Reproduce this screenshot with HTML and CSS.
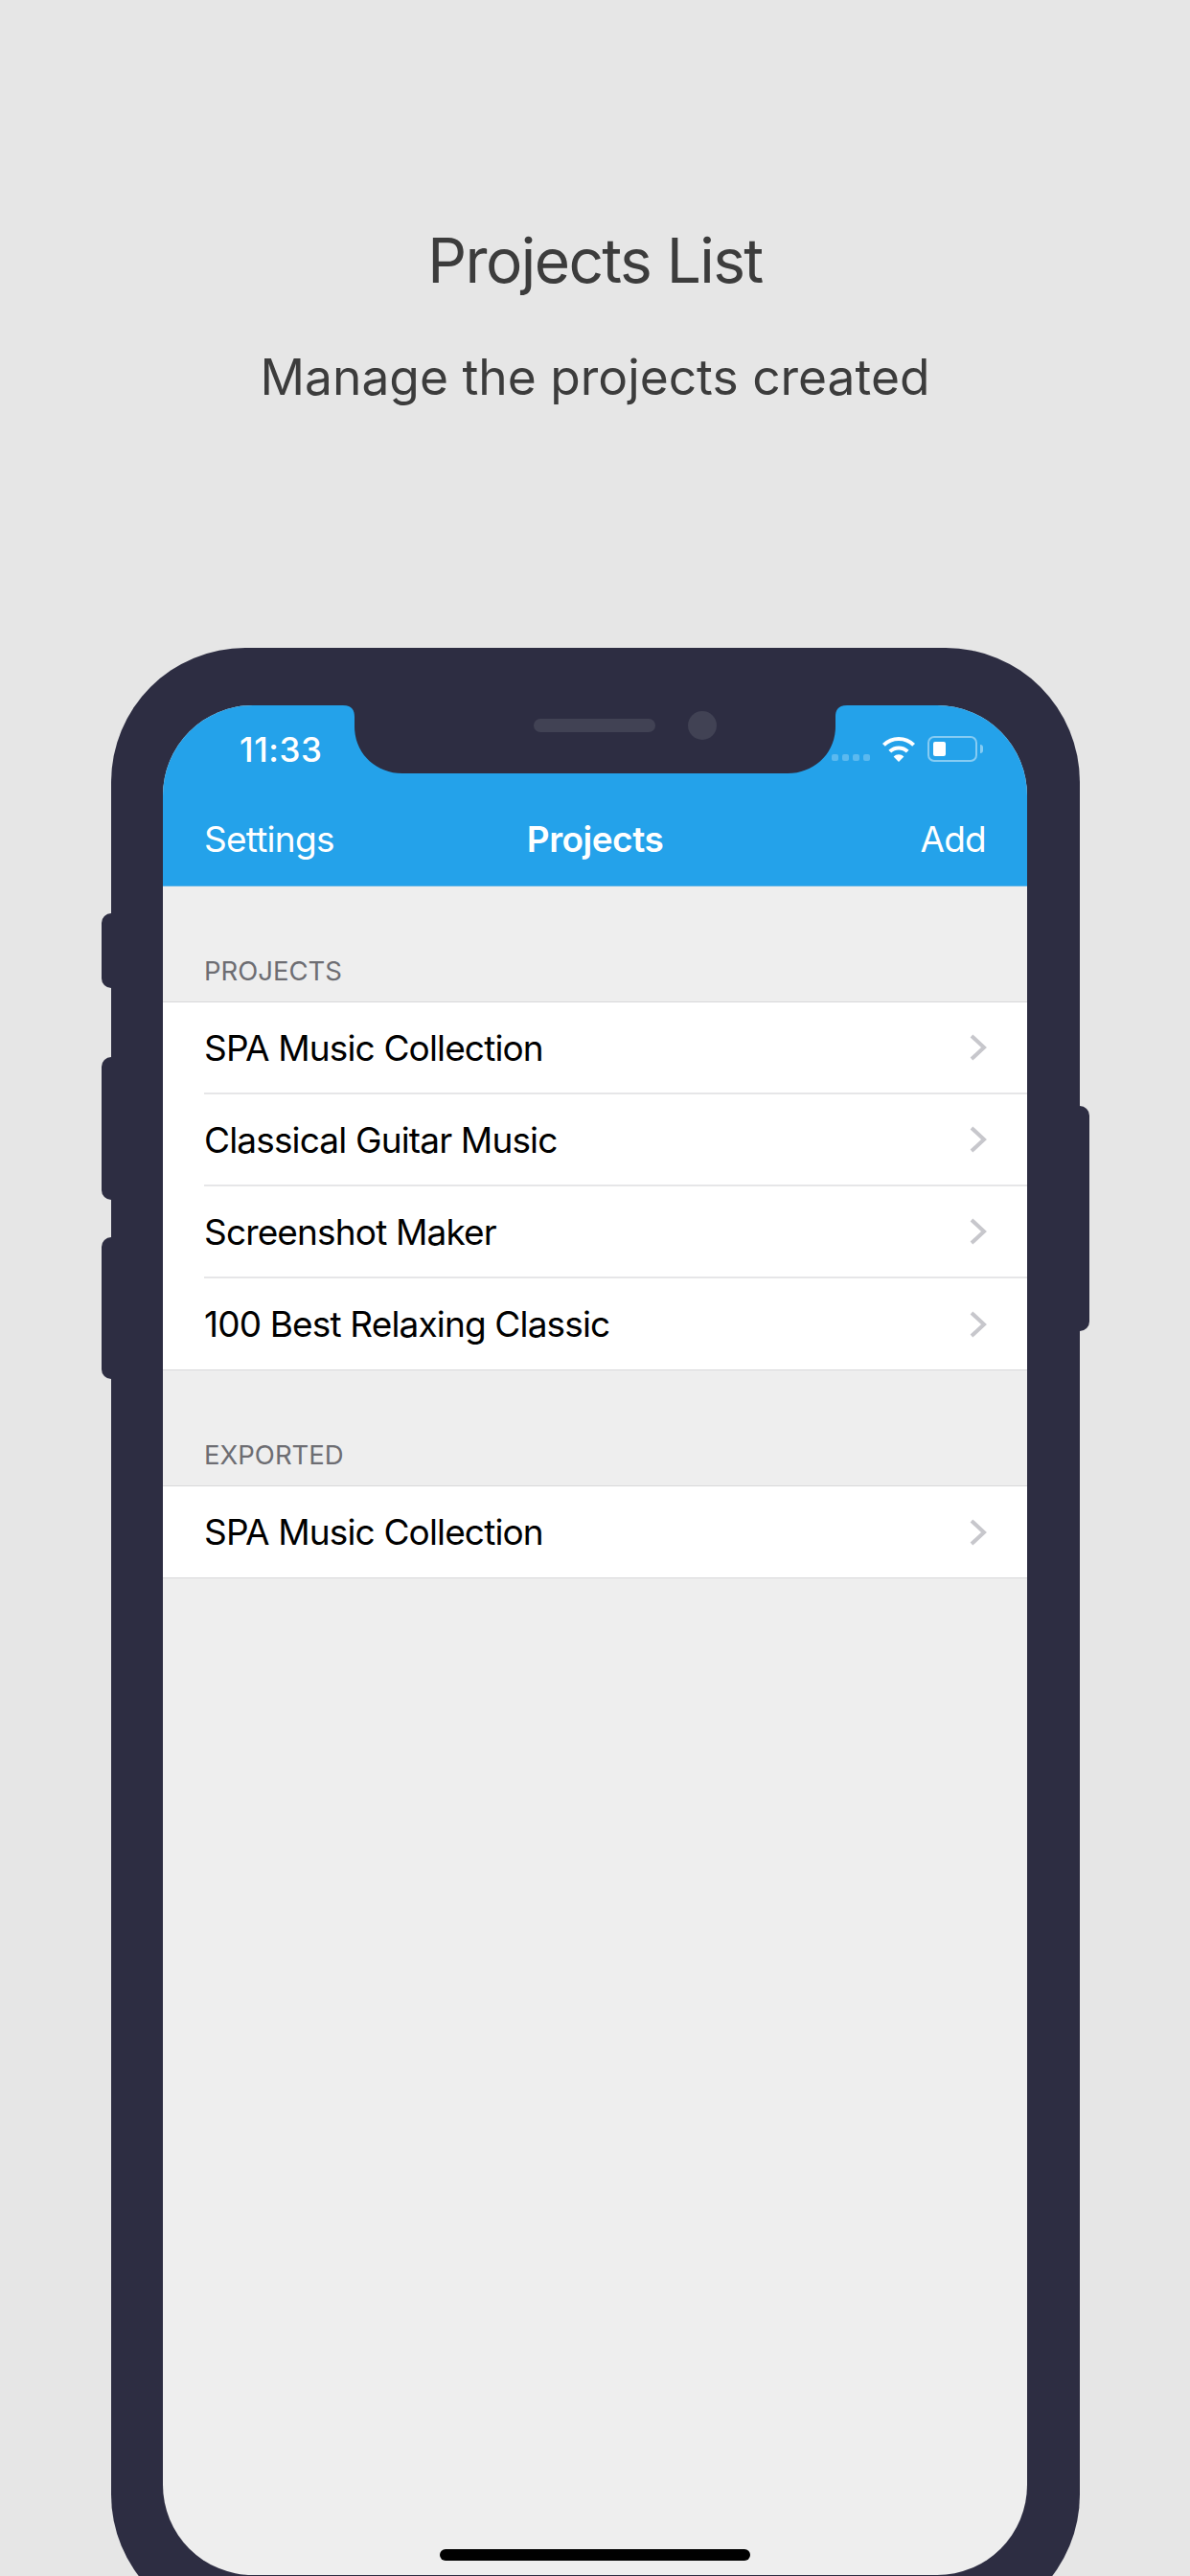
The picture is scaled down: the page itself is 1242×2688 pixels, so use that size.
FILE: index.html
```html
<!DOCTYPE html>
<html lang="en">
<head>
    <meta charset="UTF-8">
    <meta name="viewport" content="width=device-width, initial-scale=1.0">
    <title>Projects List</title>
    <link rel="stylesheet" href="styles.css">
</head>
<body>
    <div class="caption">
        <h1>Projects List</h1>
        <p>Manage the projects created</p>
    </div>

    <div class="phone">
        <span class="btn btn-mute"></span>
        <span class="btn btn-volup"></span>
        <span class="btn btn-voldown"></span>
        <span class="btn btn-power"></span>

        <svg class="notch" width="526" height="72" viewBox="0 0 526 72">
            <path fill="#2d2d42" d="M0 0H526C516 0 514 6 514 12V22C514 50 492 71 464 71H62C34 71 12 50 12 22V12C12 6 10 0 0 0Z"/>
        </svg>
        <span class="speaker"></span>
        <span class="camera"></span>

        <div class="screen">
            <div class="topbar">
                <div class="status">
                    <span class="time">11:33</span>
                    <div class="status-right">
                        <div class="signal"><i></i><i></i><i></i><i></i></div>
                        <svg class="wifi" width="36" height="27" viewBox="0 0 36 27">
                            <g fill="none" stroke="#fff" stroke-width="4">
                                <path d="M2.4 9.4A22 22 0 0 1 33.6 9.4"/>
                                <path d="M8.8 16.2A13 13 0 0 1 27.2 16.2"/>
                            </g>
                            <path fill="#fff" d="M18 27L12.6 21.6A7.6 7.6 0 0 1 23.4 21.6Z"/>
                        </svg>
                        <div class="battery"><span class="level"></span></div>
                        <span class="nub"></span>
                    </div>
                </div>
                <div class="nav">
                    <span>Settings</span>
                    <b>Projects</b>
                    <span class="nav-right">Add</span>
                </div>
            </div>

            <div class="content">
                <div class="section-title">PROJECTS</div>
                <ul class="list">
                    <li>SPA Music Collection<svg class="chev" width="18" height="28" viewBox="0 0 18 28"><path d="M2 2L15 14L2 26"/></svg></li>
                    <li>Classical Guitar Music<svg class="chev" width="18" height="28" viewBox="0 0 18 28"><path d="M2 2L15 14L2 26"/></svg></li>
                    <li>Screenshot Maker<svg class="chev" width="18" height="28" viewBox="0 0 18 28"><path d="M2 2L15 14L2 26"/></svg></li>
                    <li>100 Best Relaxing Classic<svg class="chev" width="18" height="28" viewBox="0 0 18 28"><path d="M2 2L15 14L2 26"/></svg></li>
                </ul>
                <div class="section-title">EXPORTED</div>
                <ul class="list">
                    <li>SPA Music Collection<svg class="chev" width="18" height="28" viewBox="0 0 18 28"><path d="M2 2L15 14L2 26"/></svg></li>
                </ul>
            </div>

            <div class="home-bar"></div>
        </div>
    </div>
</body>
</html>
```

FILE: styles.css
```css
*{margin: 0;padding: 0;box-sizing: border-box;}
html,body{width: 1242px;height: 2688px;overflow: hidden;}
body{background: #e6e6e6;font-family: Inter, "Noto Sans", sans-serif;}

.caption{height: 676px;padding-top: 232px;text-align: center;color: #3c3c3c;}
.caption h1{font-size: 64px;font-weight: 400;letter-spacing: -1.6px;line-height: 80px;}
.caption p{font-size: 51.5px;font-weight: 400;line-height: 66px;margin-top: 48px;}

.phone{position: relative;width: 1011px;height: 2067px;margin-left: 116px;padding: 60px 55px 56px 54px;background: #2d2d42;border-radius: 140px;}
.btn{position: absolute;width: 14px;background: #2d2d42;}
.btn-mute{left: -10px;top: 277px;height: 78px;border-radius: 10px 0 0 10px;}
.btn-volup{left: -10px;top: 427px;height: 149px;border-radius: 10px 0 0 10px;}
.btn-voldown{left: -10px;top: 615px;height: 148px;border-radius: 10px 0 0 10px;}
.btn-power{right: -10px;top: 478px;height: 235px;border-radius: 0 10px 10px 0;}

.notch{position: absolute;left: 242px;top: 60px;z-index: 2;}
.speaker{position: absolute;left: 441px;top: 74px;width: 127px;height: 14px;border-radius: 7px;background: #414254;z-index: 3;}
.camera{position: absolute;left: 602px;top: 66px;width: 30px;height: 30px;border-radius: 50%;background: #414254;z-index: 3;}

.screen{display: flex;flex-direction: column;height: 100%;background: #eeeeee;border-radius: 94px;overflow: hidden;}
.topbar{background: #24a2ea;border-bottom: 1px solid #5cb2e6;color: #fff;}
.status{display: flex;justify-content: space-between;align-items: flex-start;height: 91px;padding: 26px 46px 0 80px;}
.time{font-size: 35px;font-weight: 500;letter-spacing: .6px;line-height: 40px;}
.status-right{display: flex;align-items: flex-start;padding-top: 6px;}
.signal{display: flex;gap: 4px;margin-top: 19px;margin-right: 12px;position: relative;z-index: 4;}
.signal i{width: 7px;height: 7px;border-radius: 2px;background: rgba(255,255,255,.25);}
.wifi{margin-right: 12px;}
.battery{width: 52px;height: 27px;padding: 4px;border: 2px solid rgba(255,255,255,.45);border-radius: 7px;}
.level{display: block;width: 13px;height: 100%;background: #fff;border-radius: 2px;}
.nub{width: 3px;height: 9px;margin: 9px 0 0 3px;background: rgba(255,255,255,.45);border-radius: 0 3px 3px 0;}
.nav{display: grid;grid-template-columns: 1fr auto 1fr;align-items: center;height: 97px;padding: 0 43px;font-size: 37px;letter-spacing: -.75px;}
.nav b{font-weight: 600;letter-spacing: -.5px;}
.nav-right{text-align: right;}

.content{flex: 1;}
.section-title{height: 120px;padding: 0 0 15px 43px;display: flex;align-items: flex-end;font-size: 27.5px;line-height: 34px;color: #6d6d72;}
.list{list-style: none;background: #fff;border-top: 1px solid #d8d8da;border-bottom: 1px solid #d8d8da;}
.list li{display: flex;justify-content: space-between;align-items: center;height: 96px;margin-left: 43px;padding-right: 42px;font-size: 37px;letter-spacing: -.85px;color: #000;border-bottom: 2px solid #e6e6e8;}
.list li:last-child{border-bottom: 0;height: 95px;}
.chev{fill: none;stroke: #c7c7cc;stroke-width: 4;}

.home-bar{width: 324px;height: 12px;margin: 0 auto 15px;background: #000;border-radius: 6px;}
```
